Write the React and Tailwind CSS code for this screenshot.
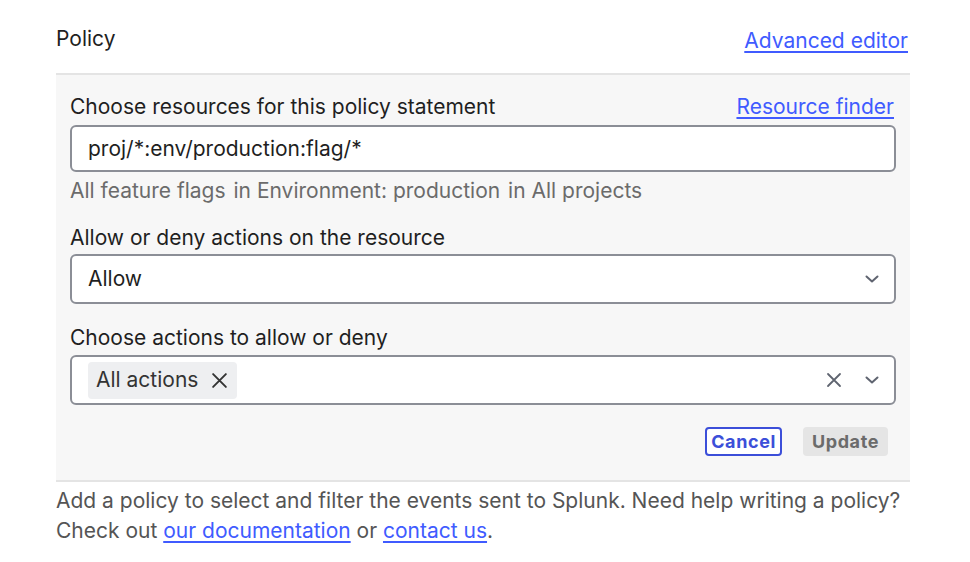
import React from "react";

const Chevron = () => (
  <svg width="16" height="16" viewBox="0 0 16 16" fill="none" stroke="#5f6470" strokeWidth="2" strokeLinecap="round" strokeLinejoin="round">
    <path d="M2.5 5.5l5.5 5 5.5-5" />
  </svg>
);

const XIcon = ({ color = "#333", size = 16 }) => (
  <svg width={size} height={size} viewBox="0 0 16 16" fill="none" stroke={color} strokeWidth="1.8" strokeLinecap="round">
    <path d="M2 2l12 12M14 2L2 14" />
  </svg>
);

export default function App() {
  return (
    <div className="w-[970px] h-[562px] bg-white font-['Inter','Liberation_Sans',sans-serif] text-[#1f1f1f]">
      <div className="ml-[56px] w-[854px]">
        <div className="flex items-center justify-between h-[73px] pt-[4px] pr-[2px]">
          <span className="text-[21px] leading-[26px]">Policy</span>
          <a className="text-[21px] leading-[26px] mt-[4px] text-[#405bff] underline underline-offset-[3px]" href="#">Advanced editor</a>
        </div>
        <div className="border-t-2 border-b-2 border-[#e4e4e4] bg-[#f7f7f7] px-[14px] pt-[19px] pb-[24px]">
          <div className="flex items-center justify-between h-[26px] pr-[2px]">
            <span className="text-[21px] leading-[26px]">Choose resources for this policy statement</span>
            <a className="text-[21px] leading-[26px] text-[#405bff] underline underline-offset-[3px]" href="#">Resource finder</a>
          </div>
          <div className="mt-[5px] h-[47px] rounded-[6px] border-2 border-[#8b8e96] bg-white flex items-center px-[16px] text-[21px]">
            proj/*:env/production:flag/*
          </div>
          <div className="mt-[6px] text-[21px] leading-[26px] text-[#6b6b6b]">
            All feature flags <span className="ml-[2px]">in Environment: production</span> <span className="ml-[2px]">in All projects</span>
          </div>
          <div className="mt-[21px] text-[21px] leading-[26px]">Allow or deny actions on the resource</div>
          <div className="mt-[3px] h-[50px] rounded-[6px] border-2 border-[#8b8e96] bg-white flex items-center justify-between pl-[16px] pr-[14px] text-[21px]">
            <span>Allow</span>
            <Chevron />
          </div>
          <div className="mt-[21px] text-[21px] leading-[26px]">Choose actions to allow or deny</div>
          <div className="mt-[4px] h-[50px] rounded-[6px] border-2 border-[#8b8e96] bg-white flex items-center justify-between pl-[16px] pr-[14px]">
            <div className="h-[37px] rounded-[4px] bg-[#eeeff1] flex items-center pl-[8px] pr-[9px] gap-[13px] text-[21px] text-[#333]">
              <span>All actions</span>
              <XIcon color="#333" size={17} />
            </div>
            <div className="flex items-center gap-[22px]">
              <XIcon color="#5f6470" size={16} />
              <Chevron />
            </div>
          </div>
          <div className="mt-[22px] flex justify-end gap-[21px] pr-[8px]">
            <button className="h-[29px] px-[4px] rounded-[4px] border-2 border-[#3c4fd9] text-[#3c4fd9] font-bold text-[18px] tracking-[0.6px] leading-none bg-white">Cancel</button>
            <button className="h-[29px] px-[9px] rounded-[4px] bg-[#e5e5e5] text-[#6b6b6b] font-bold text-[18px] tracking-[0.6px] leading-none">Update</button>
          </div>
        </div>
        <p className="mt-[4px] text-[21px] leading-[30px] text-[#555]">
          Add a policy to select and filter the events sent to Splunk. Need help writing a policy?<br />Check out{" "}
          <a href="#" className="text-[#405bff] underline underline-offset-[3px]">our documentation</a> or{" "}
          <a href="#" className="text-[#405bff] underline underline-offset-[3px]">contact us</a>.
        </p>
      </div>
    </div>
  );
}
